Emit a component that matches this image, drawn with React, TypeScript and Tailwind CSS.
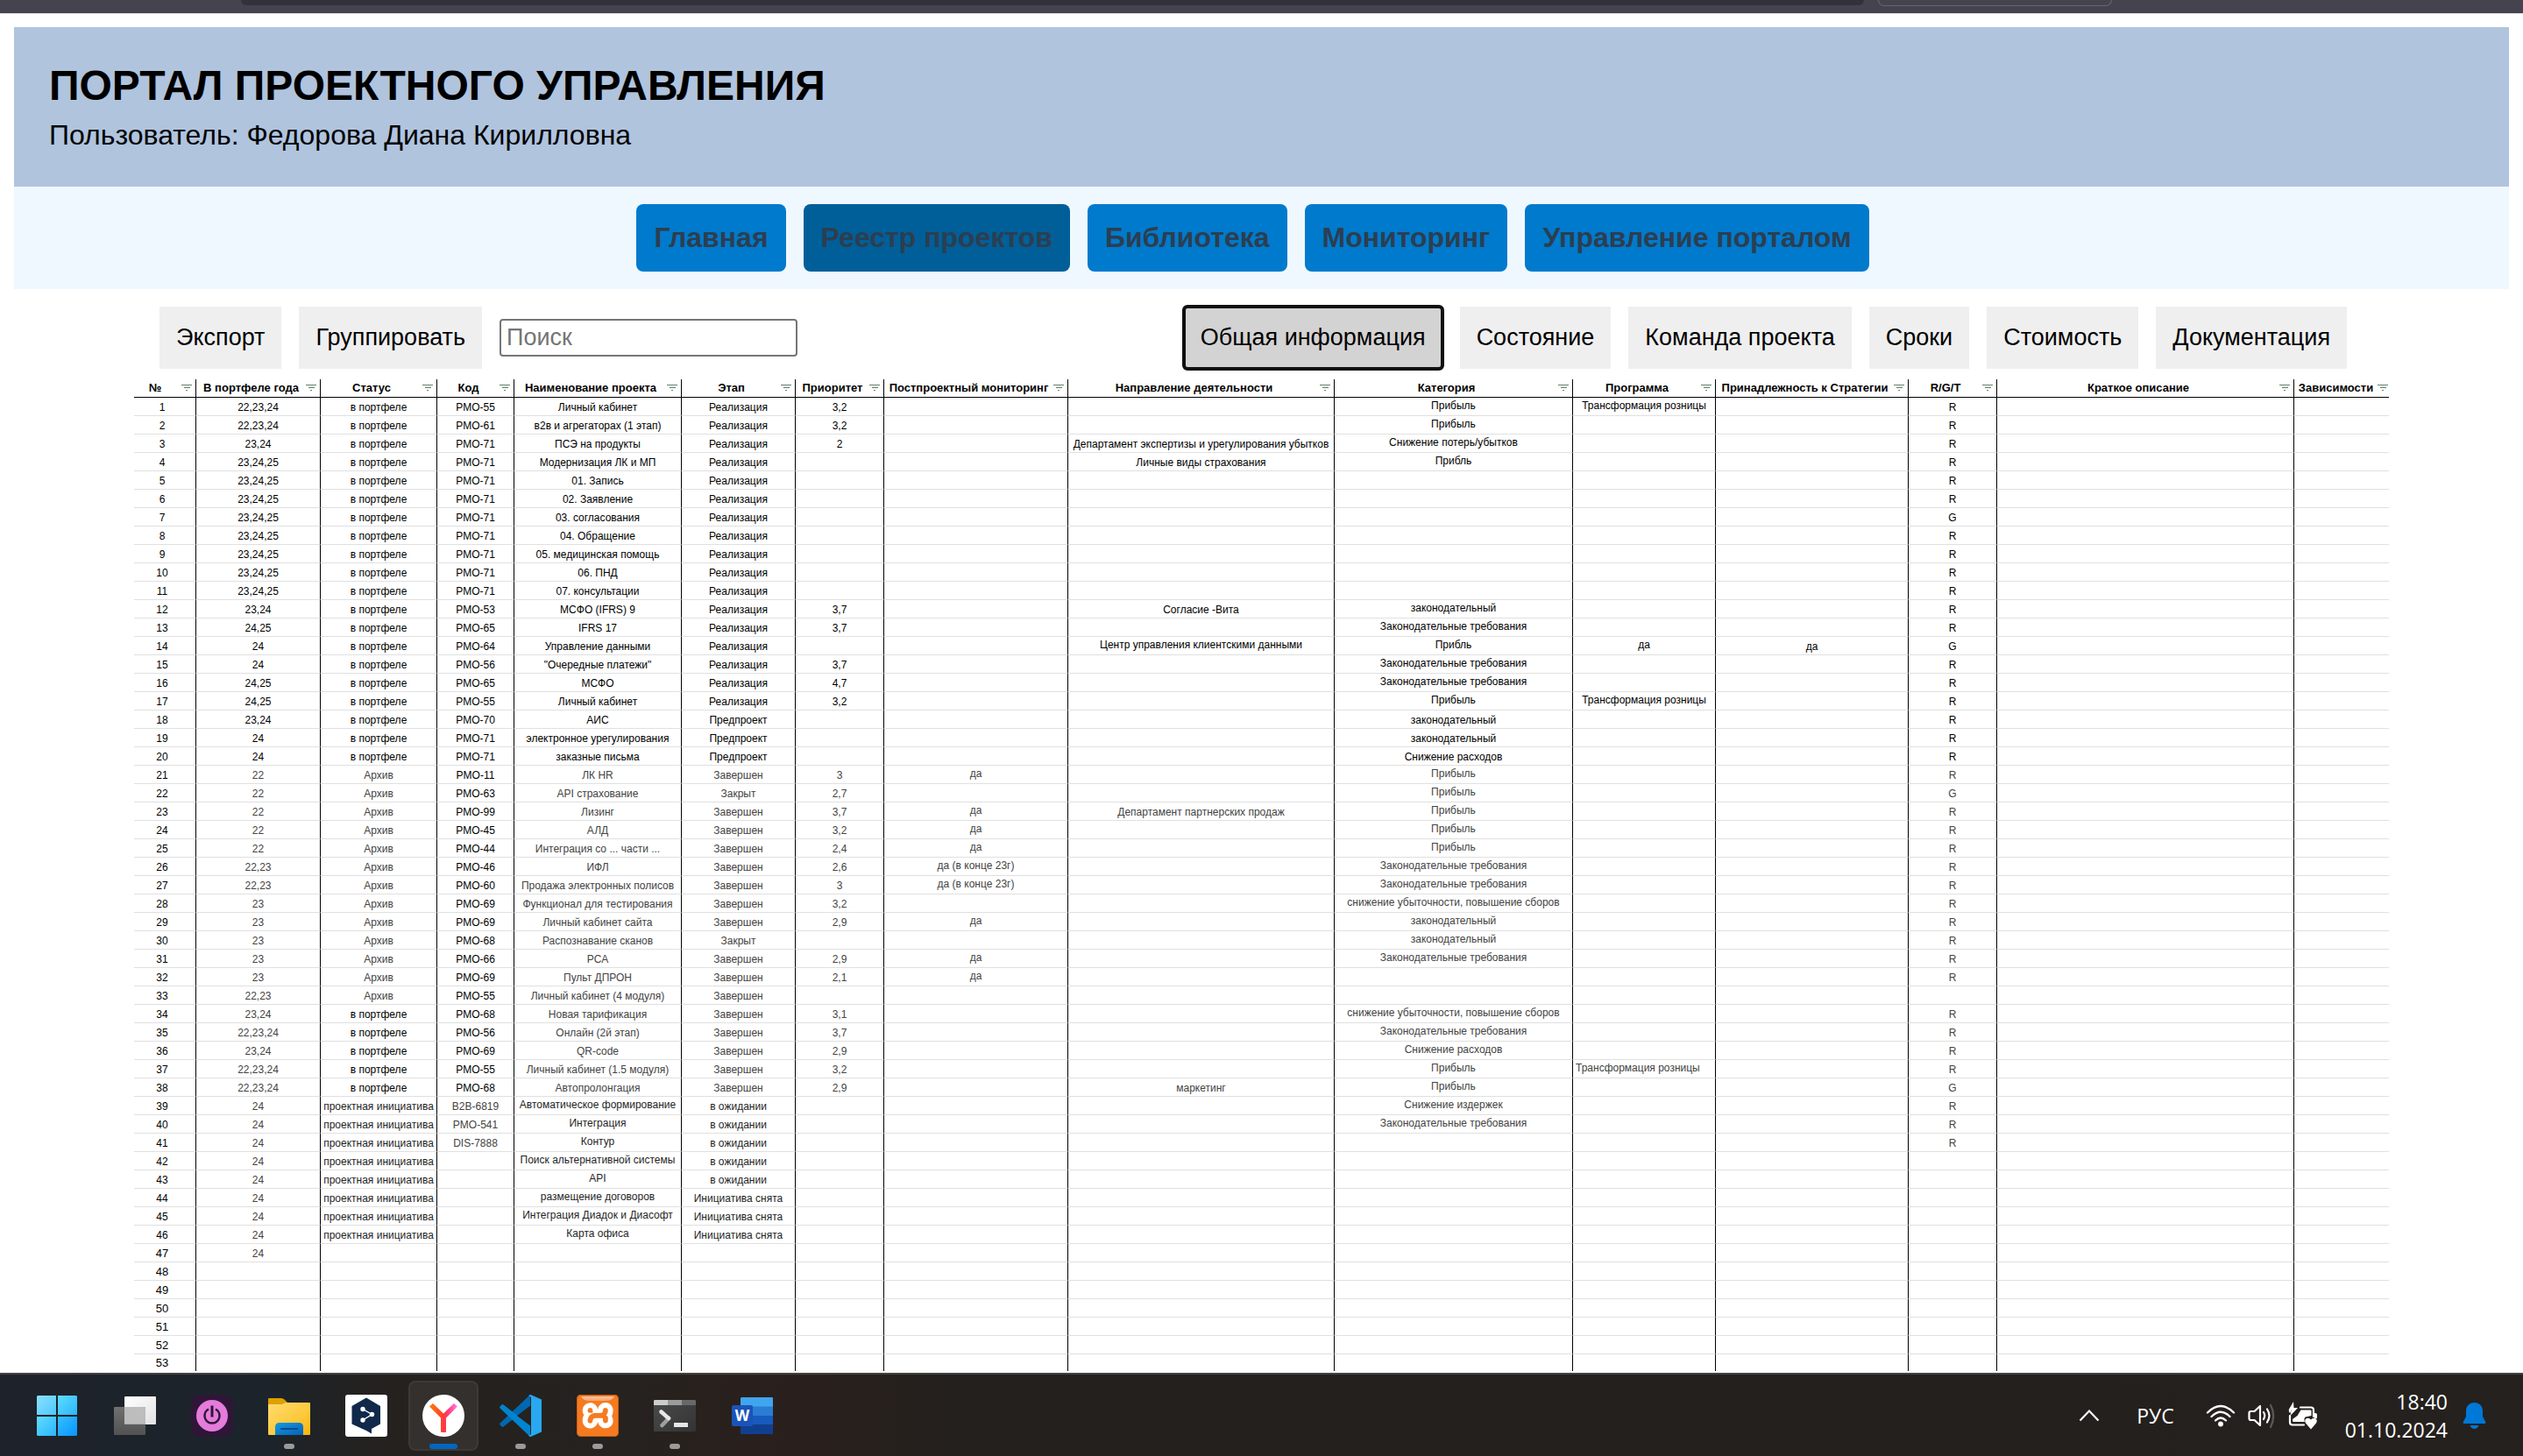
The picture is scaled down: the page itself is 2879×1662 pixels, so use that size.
import type { ReactNode } from 'react';
import { SiXampp } from 'react-icons/si';

type Column = { title: string; width: string };

const COLUMNS: Column[] = [
  { title: '№', width: 'w-[71px]' },
  { title: 'В портфеле года', width: 'w-[142px]' },
  { title: 'Статус', width: 'w-[133px]' },
  { title: 'Код', width: 'w-[88px]' },
  { title: 'Наименование проекта', width: 'w-[191px]' },
  { title: 'Этап', width: 'w-[130px]' },
  { title: 'Приоритет', width: 'w-[101px]' },
  { title: 'Постпроектный мониторинг', width: 'w-[210px]' },
  { title: 'Направление деятельности', width: 'w-[304px]' },
  { title: 'Категория', width: 'w-[272px]' },
  { title: 'Программа', width: 'w-[163px]' },
  { title: 'Принадлежность к Стратегии', width: 'w-[220px]' },
  { title: 'R/G/T', width: 'w-[101px]' },
  { title: 'Краткое описание', width: 'w-[339px]' },
  { title: 'Зависимости', width: 'w-[108px]' },
];

const P = 'в портфеле';
const A = 'Архив';
const I = 'проектная инициатива';
const REAL = 'Реализация';
const PRE = 'Предпроект';
const DONE = 'Завершен';
const WAIT = 'в ожидании';
const OFF = 'Инициатива снята';
const PROFIT = 'Прибыль';
const LAW = 'законодательный';
const LAWS = 'Законодательные требования';
const LOSS = 'снижение убыточности, повышение сборов';
const RETAIL = 'Трансформация розницы';

// years, status, code, name, stage, priority, monitoring, direction, category, programme, strategy, R/G/T
const ROWS: string[][] = [
  ['22,23,24', P, 'PMO-55', 'Личный кабинет', REAL, '3,2', '', '', PROFIT, RETAIL, '', 'R'],
  ['22,23,24', P, 'PMO-61', 'в2в и агрегаторах (1 этап)', REAL, '3,2', '', '', PROFIT, '', '', 'R'],
  ['23,24', P, 'PMO-71', 'ПСЭ на продукты', REAL, '2', '', 'Департамент экспертизы и урегулирования убытков', 'Снижение потерь/убытков', '', '', 'R'],
  ['23,24,25', P, 'PMO-71', 'Модернизация ЛК и МП', REAL, '', '', 'Личные виды страхования', 'Прибль', '', '', 'R'],
  ['23,24,25', P, 'PMO-71', '01. Запись', REAL, '', '', '', '', '', '', 'R'],
  ['23,24,25', P, 'PMO-71', '02. Заявление', REAL, '', '', '', '', '', '', 'R'],
  ['23,24,25', P, 'PMO-71', '03. согласования', REAL, '', '', '', '', '', '', 'G'],
  ['23,24,25', P, 'PMO-71', '04. Обращение', REAL, '', '', '', '', '', '', 'R'],
  ['23,24,25', P, 'PMO-71', '05. медицинская помощь', REAL, '', '', '', '', '', '', 'R'],
  ['23,24,25', P, 'PMO-71', '06. ПНД', REAL, '', '', '', '', '', '', 'R'],
  ['23,24,25', P, 'PMO-71', '07. консультации', REAL, '', '', '', '', '', '', 'R'],
  ['23,24', P, 'PMO-53', 'МСФО (IFRS) 9', REAL, '3,7', '', 'Согласие -Вита', LAW, '', '', 'R'],
  ['24,25', P, 'PMO-65', 'IFRS 17', REAL, '3,7', '', '', LAWS, '', '', 'R'],
  ['24', P, 'PMO-64', 'Управление данными', REAL, '', '', 'Центр управления клиентскими данными', 'Прибль', 'да', 'да', 'G'],
  ['24', P, 'PMO-56', '"Очередные платежи"', REAL, '3,7', '', '', LAWS, '', '', 'R'],
  ['24,25', P, 'PMO-65', 'МСФО', REAL, '4,7', '', '', LAWS, '', '', 'R'],
  ['24,25', P, 'PMO-55', 'Личный кабинет', REAL, '3,2', '', '', PROFIT, RETAIL, '', 'R'],
  ['23,24', P, 'PMO-70', 'АИС', PRE, '', '', '', LAW, '', '', 'R'],
  ['24', P, 'PMO-71', 'электронное урегулирования', PRE, '', '', '', LAW, '', '', 'R'],
  ['24', P, 'PMO-71', 'заказные письма', PRE, '', '', '', 'Снижение расходов', '', '', 'R'],
  ['22', A, 'PMO-11', 'ЛК HR', DONE, '3', 'да', '', PROFIT, '', '', 'R'],
  ['22', A, 'PMO-63', 'API страхование', 'Закрыт', '2,7', '', '', PROFIT, '', '', 'G'],
  ['22', A, 'PMO-99', 'Лизинг', DONE, '3,7', 'да', 'Департамент партнерских продаж', PROFIT, '', '', 'R'],
  ['22', A, 'PMO-45', 'АЛД', DONE, '3,2', 'да', '', PROFIT, '', '', 'R'],
  ['22', A, 'PMO-44', 'Интеграция со ... части ...', DONE, '2,4', 'да', '', PROFIT, '', '', 'R'],
  ['22,23', A, 'PMO-46', 'ИФЛ', DONE, '2,6', 'да (в конце 23г)', '', LAWS, '', '', 'R'],
  ['22,23', A, 'PMO-60', 'Продажа электронных полисов', DONE, '3', 'да (в конце 23г)', '', LAWS, '', '', 'R'],
  ['23', A, 'PMO-69', 'Функционал для тестирования', DONE, '3,2', '', '', LOSS, '', '', 'R'],
  ['23', A, 'PMO-69', 'Личный кабинет сайта', DONE, '2,9', 'да', '', LAW, '', '', 'R'],
  ['23', A, 'PMO-68', 'Распознавание сканов', 'Закрыт', '', '', '', LAW, '', '', 'R'],
  ['23', A, 'PMO-66', 'РСА', DONE, '2,9', 'да', '', LAWS, '', '', 'R'],
  ['23', A, 'PMO-69', 'Пульт ДПРОН', DONE, '2,1', 'да', '', '', '', '', 'R'],
  ['22,23', A, 'PMO-55', 'Личный кабинет (4 модуля)', DONE, '', '', '', '', '', '', ''],
  ['23,24', P, 'PMO-68', 'Новая тарификация', DONE, '3,1', '', '', LOSS, '', '', 'R'],
  ['22,23,24', P, 'PMO-56', 'Онлайн (2й этап)', DONE, '3,7', '', '', LAWS, '', '', 'R'],
  ['23,24', P, 'PMO-69', 'QR-code', DONE, '2,9', '', '', 'Снижение расходов', '', '', 'R'],
  ['22,23,24', P, 'PMO-55', 'Личный кабинет (1.5 модуля)', DONE, '3,2', '', '', PROFIT, RETAIL, '', 'R'],
  ['22,23,24', P, 'PMO-68', 'Автопролонгация', DONE, '2,9', '', 'маркетинг', PROFIT, '', '', 'G'],
  ['24', I, 'B2B-6819', 'Автоматическое формирование', WAIT, '', '', '', 'Снижение издержек', '', '', 'R'],
  ['24', I, 'PMO-541', 'Интеграция', WAIT, '', '', '', LAWS, '', '', 'R'],
  ['24', I, 'DIS-7888', 'Контур', WAIT, '', '', '', '', '', '', 'R'],
  ['24', I, '', 'Поиск альтернативной системы', WAIT],
  ['24', I, '', 'API', WAIT],
  ['24', I, '', 'размещение договоров', OFF],
  ['24', I, '', 'Интеграция Диадок и Диасофт', OFF],
  ['24', I, '', 'Карта офиса', OFF],
  ['24'],
  [],
  [],
  [],
  [],
  [],
  [],
];

function textColor(row: number, col: number, value: string) {
  const muted = 'text-[#434343]';
  if (row < 21) return '';
  if (col === 1) return value === A ? muted : row >= 39 ? 'text-[#1f1f1f]' : '';
  if (col === 2) return row >= 39 ? muted : '';
  if (col === 3 || col === 4) return row < 39 ? muted : 'text-[#1f1f1f]';
  return muted;
}

function isTop(row: number, col: number) {
  if (col === 8) return row < 18 || row > 20;
  if (col === 7) return row === 14;
  if (col === 3) return row >= 39;
  return col === 6 || col === 9;
}

function FilterButton({ title }: { title: string }) {
  return (
    <button type="button" aria-label={`Фильтр: ${title}`} className="block h-3 w-3 shrink-0">
      <svg viewBox="0 0 12 12" className="block h-3 w-3" shapeRendering="crispEdges" fill="#5f7f68">
        <rect x="0" y="2" width="12" height="1" />
        <rect x="3" y="5" width="7" height="1" />
        <rect x="5" y="8" width="2" height="1" />
      </svg>
    </button>
  );
}

function ProjectTable() {
  return (
    <table className="w-full table-fixed border-separate border-spacing-0 text-[12px] leading-[18px] text-black">
      <thead>
        <tr>
          {COLUMNS.map((c, i) => (
            <th
              key={c.title}
              scope="col"
              className={`${c.width} h-[21px] border-b border-black p-0 align-middle text-[13px] font-bold whitespace-nowrap ${i < 14 ? 'border-r' : ''}`}
            >
              <div className={`flex items-center ${i === 14 ? 'pr-px' : 'pr-1'}`}>
                <span className={`min-w-0 flex-1 text-center ${i === 0 ? '-ml-1.5' : ''}`}>{c.title}</span>
                <FilterButton title={c.title} />
              </div>
            </th>
          ))}
        </tr>
      </thead>
      <tbody>
        {ROWS.map((cells, r) => {
          const n = r + 1;
          const last = n === ROWS.length;
          return (
            <tr key={n}>
              <td
                className={`border-r border-r-black p-0 pr-1.5 text-center align-bottom ${last ? 'h-[19px]' : 'h-[21px] border-b border-b-[#e0e0e0]'} ${n > 46 ? 'text-[13px]' : ''}`}
              >
                {n}
              </td>
              {COLUMNS.slice(1).map((c, i) => {
                const value = cells[i] ?? '';
                const left = i === 9 && n === 37;
                return (
                  <td
                    key={c.title}
                    className={`overflow-hidden p-0 whitespace-nowrap ${i < 13 ? 'border-r border-r-black' : ''} ${last ? '' : 'border-b border-b-[#e0e0e0]'} ${isTop(n, i) ? 'align-top' : 'align-bottom'} ${left ? 'pl-[3px] text-left' : 'text-center'} ${textColor(n, i, value)}`}
                  >
                    {value}
                  </td>
                );
              })}
            </tr>
          );
        })}
      </tbody>
    </table>
  );
}

const SECTIONS = ['Главная', 'Реестр проектов', 'Библиотека', 'Мониторинг', 'Управление порталом'];
const VIEWS = ['Общая информация', 'Состояние', 'Команда проекта', 'Сроки', 'Стоимость', 'Документация'];

function ToolButton({ children, active = false }: { children: ReactNode; active?: boolean }) {
  return (
    <button
      type="button"
      className={`px-[19px] py-5 text-[27px] leading-[31px] whitespace-nowrap text-black ${active ? 'rounded-[4px] bg-[#d3d3d3] outline-4 -outline-offset-2 outline-[#101010]' : 'bg-[#efefef]'}`}
    >
      {children}
    </button>
  );
}

function TaskButton({
  label,
  children,
  active = false,
  running = false,
}: {
  label: string;
  children: ReactNode;
  active?: boolean;
  running?: boolean;
}) {
  return (
    <button
      type="button"
      aria-label={label}
      className={`relative flex h-20 w-20 items-center justify-center rounded-lg ${active ? 'border-2 border-[#3d3936] bg-[#34302d]' : ''}`}
    >
      {children}
      {running && <span className="absolute bottom-0.5 h-1.5 w-3 rounded-full bg-[#9b9a99]" />}
      {active && <span className="absolute bottom-0 h-1.5 w-8 rounded-full bg-[#0067c0]" />}
    </button>
  );
}

function WindowsIcon() {
  return (
    <svg width="48" height="48" viewBox="0 0 48 48">
      <defs>
        <linearGradient id="win" x1="0" y1="0" x2="1" y2="1">
          <stop offset="0" stopColor="#8be0ff" />
          <stop offset="1" stopColor="#4cc9fb" />
        </linearGradient>
        <linearGradient id="win2" x1="0" y1="0" x2="1" y2="1">
          <stop offset="0" stopColor="#5fdcff" />
          <stop offset="1" stopColor="#2bb5fb" />
        </linearGradient>
        <linearGradient id="win3" x1="0" y1="0" x2="1" y2="1">
          <stop offset="0" stopColor="#33c0fd" />
          <stop offset="1" stopColor="#0a93ff" />
        </linearGradient>
      </defs>
      <path d="M1 1h21v22H0V2z" fill="url(#win)" />
      <path d="M24 1h21l1 1v21H24z" fill="url(#win2)" />
      <path d="M0 25h22v22H1l-1-1z" fill="url(#win2)" />
      <path d="M24 25h22v21l-1 1H24z" fill="url(#win3)" />
    </svg>
  );
}

function TaskViewIcon() {
  return (
    <svg width="48" height="48" viewBox="0 0 48 48">
      <defs>
        <linearGradient id="tv" x1="0" y1="0" x2="1" y2="1">
          <stop offset="0" stopColor="#ffffff" />
          <stop offset="1" stopColor="#e2e2e2" />
        </linearGradient>
        <linearGradient id="tv2" x1="0" y1="0" x2="0" y2="1">
          <stop offset="0" stopColor="#707070" />
          <stop offset="1" stopColor="#525252" />
        </linearGradient>
      </defs>
      <rect x="0" y="14" width="36" height="32" rx="1" fill="url(#tv2)" />
      <rect x="12" y="2" width="36" height="32" rx="1" fill="url(#tv)" />
      <rect x="12" y="14" width="24" height="20" fill="#bdbdbd" />
      <rect x="12" y="33" width="24" height="1" fill="#a8a8a8" />
    </svg>
  );
}

function PowerIcon() {
  return (
    <svg width="48" height="48" viewBox="0 0 48 48">
      <rect width="48" height="48" rx="11" fill="#2f1638" />
      <circle cx="24" cy="24" r="18" fill="#e57bdb" />
      <path d="M20 16.5a8.5 8.5 0 1 0 8 0" fill="none" stroke="#2f1638" strokeWidth="2.4" />
      <path d="M24 12.5v13" stroke="#2f1638" strokeWidth="3" />
    </svg>
  );
}

function FolderIcon() {
  return (
    <svg width="48" height="48" viewBox="0 0 48 48">
      <defs>
        <linearGradient id="fd" x1="0" y1="0" x2="1" y2="1">
          <stop offset="0" stopColor="#ffdb70" />
          <stop offset="0.6" stopColor="#fdc93c" />
          <stop offset="1" stopColor="#f7b40c" />
        </linearGradient>
        <linearGradient id="fb" x1="0" y1="0" x2="1" y2="1">
          <stop offset="0" stopColor="#159be0" />
          <stop offset="1" stopColor="#0560b8" />
        </linearGradient>
      </defs>
      <path d="M0 5q0-1 1-1h14q2 0 3.5 1.5L22 9v4H0z" fill="#dea002" />
      <path d="M0 12q0-1 1-1h15l4-2h27q1 0 1 1v35q0 1-1 1H1q-1 0-1-1z" fill="url(#fd)" />
      <path d="M8 46V37q0-5 5-5h22q5 0 5 5v9z" fill="url(#fb)" />
      <rect x="14" y="38" width="20" height="2" rx="1" fill="#0a4a92" />
    </svg>
  );
}

function DeepLIcon() {
  return (
    <svg width="48" height="48" viewBox="0 0 48 48">
      <rect width="48" height="48" rx="3" fill="#fff" />
      <path d="M24 3.5 40 13v20.5l-10 5.5v5.5l-6-3.5L7.5 33.5V13z" fill="#10294b" />
      <path d="M20 16.5 30.5 22.5 20 29" fill="none" stroke="#fff" strokeWidth="1.4" />
      <circle cx="20" cy="16.5" r="2.7" fill="#fff" />
      <circle cx="30.5" cy="22.5" r="2.7" fill="#fff" />
      <circle cx="20" cy="29" r="2.7" fill="#fff" />
    </svg>
  );
}

function YandexIcon() {
  return (
    <svg width="48" height="48" viewBox="0 0 48 48">
      <defs>
        <linearGradient id="ya" x1="8" y1="12" x2="40" y2="12" gradientUnits="userSpaceOnUse">
          <stop offset="0" stopColor="#ff7a00" />
          <stop offset="0.5" stopColor="#ff3b3b" />
          <stop offset="0.65" stopColor="#fd3a6a" />
          <stop offset="1" stopColor="#ff7cf5" />
        </linearGradient>
      </defs>
      <circle cx="24" cy="24" r="24" fill="#fff" />
      <path d="M8 13.5 12 10 24 21.5 36 10 40 13.5 27 26.5V42q0 1-1 1h-4q-1 0-1-1V26.5z" fill="url(#ya)" />
    </svg>
  );
}

function CodeIcon() {
  return (
    <svg width="48" height="48" viewBox="0 0 48 48">
      <path d="M35 0v13L4.5 36.5q-1 .8-2 0L.6 34.6q-1-1.1 0-2.200z" fill="#0068b0" />
      <path d="M35 48V35L4.5 11.5q-1-.8-2 0L.6 13.4q-1 1.1 0 2.200z" fill="#0084d1" />
      <path d="M36 12 20 24 36 36z" fill="#26221f" />
      <path d="M35.5 0 48 5.5v37L35.5 48q-1.5 0-2.5-1.500 3 0 3-2.500V4q0-2.500-3-2.500Q34 0 35.5 0z" fill="#28a8f1" />
    </svg>
  );
}

function XamppIcon() {
  return (
    <svg width="48" height="48" viewBox="0 0 48 48">
      <defs>
        <linearGradient id="xg" x1="0" y1="0" x2="0" y2="1">
          <stop offset="0" stopColor="#fbc49e" />
          <stop offset="1" stopColor="#f9a468" />
        </linearGradient>
      </defs>
      <rect x="3" y="3" width="42" height="42" fill="#fff" />
      <SiXampp x="0" y="0" size={48} color="#f67a20" />
      <path d="M5 2h38q-2 5-10 5H15Q7 7 5 2z" fill="url(#xg)" />
      <rect x="0.5" y="0.5" width="47" height="47" rx="4" fill="none" stroke="#c95f16" />
    </svg>
  );
}

function TerminalIcon() {
  return (
    <svg width="48" height="48" viewBox="0 0 48 48">
      <defs>
        <linearGradient id="tm" x1="0" y1="0" x2="1" y2="1">
          <stop offset="0" stopColor="#4b4b4b" />
          <stop offset="1" stopColor="#333" />
        </linearGradient>
      </defs>
      <rect y="6" width="48" height="36" rx="1" fill="url(#tm)" />
      <path d="M1 6h15v6H0V7z" fill="#ccc" />
      <path d="M16 6h16v6H16z" fill="#9b9b9b" />
      <path d="M32 6h15l1 1v5H32z" fill="#686868" />
      <path d="M17 27 9.5 35" stroke="#9f9f9f" strokeWidth="4.5" strokeLinecap="round" />
      <path d="M8.5 19.5 17 27" stroke="#e6e6e6" strokeWidth="4.5" strokeLinecap="round" />
      <rect x="23" y="32" width="16" height="5" rx="0.5" fill="#e6e6e6" />
    </svg>
  );
}

function WordIcon() {
  return (
    <svg width="48" height="48" viewBox="0 0 48 48">
      <path d="M12 3h35q1 0 1 1v10H11V4z" fill="#41a5ee" />
      <path d="M11 13.5h37V24H11z" fill="#2b7cd3" />
      <path d="M11 24h37v10.5H11z" fill="#185abd" />
      <path d="M11 34.5h37V44q0 1-1 1H12q-1 0-1-1z" fill="#103f91" />
      <rect x="1" y="12" width="24" height="24" rx="2" fill="#1a53ba" />
      <text x="13" y="30" textAnchor="middle" fill="#fff" fontFamily="Open Sans, sans-serif" fontWeight="700" fontSize="17">
        W
      </text>
    </svg>
  );
}

function Taskbar() {
  return (
    <footer className="mt-auto flex h-[95px] shrink-0 items-center justify-between border-t-2 border-[#434341] bg-[linear-gradient(90deg,#1e222b_0px,#1c242b_300px,#25211e_440px,#26221f_720px,#2a201d_880px,#24201d_1100px,#24201d_2400px,#25211e_100%)] pr-[42px] pl-[26px] text-white">
      <div className="flex gap-2">
        <TaskButton label="Пуск"><WindowsIcon /></TaskButton>
        <TaskButton label="Представление задач"><TaskViewIcon /></TaskButton>
        <TaskButton label="Питание"><PowerIcon /></TaskButton>
        <TaskButton label="Проводник" running><FolderIcon /></TaskButton>
        <TaskButton label="DeepL"><DeepLIcon /></TaskButton>
        <TaskButton label="Яндекс Браузер" active><YandexIcon /></TaskButton>
        <TaskButton label="Visual Studio Code" running><CodeIcon /></TaskButton>
        <TaskButton label="XAMPP" running><XamppIcon /></TaskButton>
        <TaskButton label="Терминал" running><TerminalIcon /></TaskButton>
        <TaskButton label="Word"><WordIcon /></TaskButton>
      </div>
      <div className="flex items-center font-['Open_Sans',sans-serif] text-[23px] leading-8">
        <button type="button" aria-label="Скрытые значки" className="mr-[42px]">
          <svg width="24" height="24" viewBox="0 0 24 24" fill="none" stroke="#fff" strokeWidth="2.2">
            <path d="M1.5 17.500 12 6.5l10.500 11" />
          </svg>
        </button>
        <button type="button" className="mr-9">РУС</button>
        <button type="button" aria-label="Сеть, звук, батарея" className="mr-[31px] flex items-center gap-3.5">
          <svg width="34" height="32" viewBox="0 0 34 32" fill="none" stroke="#fff" strokeWidth="2.3" strokeLinecap="round">
            <path d="M2 12.5q15-15 30 0" />
            <path d="M6.5 17q10.500-10.500 21 0" />
            <path d="M11 21.5q6-6 12 0" />
            <circle cx="17" cy="25.5" r="1.8" fill="#fff" />
          </svg>
          <svg width="32" height="32" viewBox="0 0 32 32" fill="none" stroke="#fff" strokeWidth="2.2" strokeLinejoin="round" strokeLinecap="round">
            <path d="M14 5v22l-6.500-6H3.5Q1.5 21 1.5 19v-6q0-2 2-2h4z" />
            <path d="M18 12q2.500 4 0 8M22 8.5q5 7.500 0 15" />
            <path d="M26 4q6.500 12 0 25" stroke="#5c5956" />
          </svg>
          <svg width="34" height="32" viewBox="0 0 34 32">
            <path d="M14 6.5h12q3 0 3 3V17M2 16v7.500q0 3 3 3h13M2 9v2.500" fill="none" stroke="#fff" strokeWidth="2.2" strokeLinecap="round" />
            <path d="M30 13h1q2 0 2 2v4h-3z" fill="#fff" />
            <path d="M14.5 9.5h11q1 0 1 1v5.500l-7 1.500q-2 2.500-.5 5.500H5.5L5 20l5.500-4z" fill="#fff" />
            <path d="M6 0 0.500 9.5h3L2.500 16 11 7H6.5z" fill="#fff" />
            <path d="M26 31.500 20 24.500q-2-4 1-5.500 3-1 5 1.500 2-2.500 5-1.500 3 1.500 1 5.500z" fill="#fff" />
          </svg>
        </button>
        <time className="mr-[17px] block text-right">
          18:40
          <br />
          01.10.2024
        </time>
        <button type="button" aria-label="Уведомления">
          <svg width="27" height="32" viewBox="0 0 27 32" fill="#0078d7">
            <path d="M13.5 1C19 1 23 5 23 10.500V17l3.200 6q.8 2-1 2H1.800Q0 25 .8 23L4 17v-6.500C4 5 8 1 13.500 1z" />
            <path d="M8.5 27h10q-1.500 4-5 4t-5-4z" />
          </svg>
        </button>
      </div>
    </footer>
  );
}

export default function App() {
  return (
    <div className="flex min-h-screen flex-col bg-white font-['Liberation_Sans',Arial,sans-serif] text-black">
      <div className="flex h-4 gap-4 border-b border-[#e3e2e8] bg-[#45444e] pr-[469px] pl-[275px]">
        <div className="h-1.5 flex-1 rounded-b-md bg-[#33323c]" />
        <div className="h-[7px] w-[267px] rounded-b-lg border border-t-0 border-[#67666f]" />
      </div>

      <main className="px-4 pt-[15px]">
        <header className="bg-[#b0c4de] px-10 pt-[39px] pb-10">
          <h1 className="text-[48px] leading-[56px] font-bold">ПОРТАЛ ПРОЕКТНОГО УПРАВЛЕНИЯ</h1>
          <p className="mt-2.5 text-[32px] leading-[37px]">Пользователь: Федорова Диана Кирилловна</p>
        </header>

        <nav className="flex justify-center gap-5 bg-[#f0f8ff] py-5 pr-5">
          {SECTIONS.map((s, i) => (
            <a
              key={s}
              href="#"
              className={`rounded-lg p-5 text-[32px] leading-[37px] font-bold text-[#2c3e50] ${i === 1 ? 'bg-[#005f99]' : 'bg-[#007acc]'}`}
            >
              {s}
            </a>
          ))}
        </nav>

        <section className="flex items-center justify-between pt-5 pr-[185px] pb-3 pl-[166px]">
          <div className="flex items-center gap-5">
            <ToolButton>Экспорт</ToolButton>
            <ToolButton>Группировать</ToolButton>
            <input
              type="search"
              aria-label="Поиск"
              placeholder="Поиск"
              className="h-[43px] w-[340px] rounded-[4px] border-2 border-[#767676] bg-white px-1.5 text-[27px] leading-[31px] placeholder:text-[#757575]"
            />
          </div>
          <div className="flex gap-5">
            {VIEWS.map((v, i) => (
              <ToolButton key={v} active={i === 0}>
                {v}
              </ToolButton>
            ))}
          </div>
        </section>

        <section className="px-[137px] pb-0.5">
          <ProjectTable />
        </section>
      </main>

      <Taskbar />
    </div>
  );
}
